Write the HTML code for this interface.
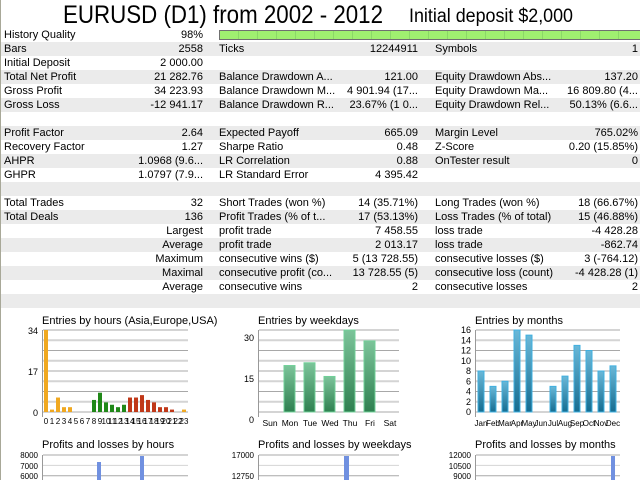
<!DOCTYPE html>
<html><head><meta charset="utf-8"><style>
*{margin:0;padding:0}
body{width:640px;height:480px;background:#fff;position:relative;overflow:hidden;font-family:"Liberation Sans",sans-serif;font-size:11px;color:#000}
.lb{position:absolute;left:0;top:0;width:1px;height:480px;background:#a8a898}
.r{position:absolute;left:1px;width:639px;height:14px}
.g{background:#ebebeb}
.t{position:absolute;top:1px;white-space:nowrap;line-height:13px}
.rt{text-align:right}
</style></head><body>
<div class="lb"></div>
<svg style="position:absolute;left:0;top:0" width="640" height="28">
<text x="63" y="23" font-family="Liberation Sans Narrow, Liberation Sans, sans-serif" font-size="25" textLength="320" lengthAdjust="spacingAndGlyphs">EURUSD (D1) from 2002 - 2012</text>
<text x="409" y="22" font-family="Liberation Sans Narrow, Liberation Sans, sans-serif" font-size="19" textLength="164" lengthAdjust="spacingAndGlyphs">Initial deposit $2,000</text>
</svg>
<div id="rows"></div>
<svg style="position:absolute;left:219px;top:30px" width="421" height="10">
<rect x="0.5" y="0.5" width="421" height="9" fill="#a0f070" stroke="#707070"/>
<g stroke="#8cd868" stroke-width="1">
<line x1="19.5" y1="1" x2="19.5" y2="9"/><line x1="38.5" y1="1" x2="38.5" y2="9"/><line x1="57.5" y1="1" x2="57.5" y2="9"/><line x1="76.5" y1="1" x2="76.5" y2="9"/><line x1="95.5" y1="1" x2="95.5" y2="9"/><line x1="114.5" y1="1" x2="114.5" y2="9"/><line x1="133.5" y1="1" x2="133.5" y2="9"/><line x1="152.5" y1="1" x2="152.5" y2="9"/><line x1="171.5" y1="1" x2="171.5" y2="9"/><line x1="190.5" y1="1" x2="190.5" y2="9"/><line x1="209.5" y1="1" x2="209.5" y2="9"/><line x1="228.5" y1="1" x2="228.5" y2="9"/><line x1="247.5" y1="1" x2="247.5" y2="9"/><line x1="266.5" y1="1" x2="266.5" y2="9"/><line x1="285.5" y1="1" x2="285.5" y2="9"/><line x1="304.5" y1="1" x2="304.5" y2="9"/><line x1="323.5" y1="1" x2="323.5" y2="9"/><line x1="342.5" y1="1" x2="342.5" y2="9"/><line x1="361.5" y1="1" x2="361.5" y2="9"/><line x1="380.5" y1="1" x2="380.5" y2="9"/><line x1="399.5" y1="1" x2="399.5" y2="9"/>
</g></svg>
<svg id="ch" style="position:absolute;left:0;top:308px" width="640" height="172" font-family="Liberation Sans, sans-serif"></svg>
<script>
var R=[
["History Quality","98%","","","",""],
["Bars","2558","Ticks","12244911","Symbols","1"],
["Initial Deposit","2 000.00","","","",""],
["Total Net Profit","21 282.76","Balance Drawdown A...","121.00","Equity Drawdown Abs...","137.20"],
["Gross Profit","34 223.93","Balance Drawdown M...","4 901.94 (17...","Equity Drawdown Ma...","16 809.80 (4..."],
["Gross Loss","-12 941.17","Balance Drawdown R...","23.67% (1 0...","Equity Drawdown Rel...","50.13% (6.6..."],
["","","","","",""],
["Profit Factor","2.64","Expected Payoff","665.09","Margin Level","765.02%"],
["Recovery Factor","1.27","Sharpe Ratio","0.48","Z-Score","0.20 (15.85%)"],
["AHPR","1.0968 (9.6...","LR Correlation","0.88","OnTester result","0"],
["GHPR","1.0797 (7.9...","LR Standard Error","4 395.42","",""],
["","","","","",""],
["Total Trades","32","Short Trades (won %)","14 (35.71%)","Long Trades (won %)","18 (66.67%)"],
["Total Deals","136","Profit Trades (% of t...","17 (53.13%)","Loss Trades (% of total)","15 (46.88%)"],
["#Largest","","profit trade","7 458.55","loss trade","-4 428.28"],
["#Average","","profit trade","2 013.17","loss trade","-862.74"],
["#Maximum","","consecutive wins ($)","5 (13 728.55)","consecutive losses ($)","3 (-764.12)"],
["#Maximal","","consecutive profit (co...","13 728.55 (5)","consecutive loss (count)","-4 428.28 (1)"],
["#Average","","consecutive wins","2","consecutive losses","2"],
["","","","","",""]];
var h="";
R.forEach(function(r,i){
 h+='<div class="r'+(i%2?' g':'')+'" style="top:'+(28+i*14)+'px">';
 if(r[0][0]=="#") h+='<span class="t rt" style="right:437px">'+r[0].slice(1)+'</span>';
 else { h+='<span class="t" style="left:3px">'+r[0]+'</span><span class="t rt" style="right:437px">'+r[1]+'</span>'; }
 h+='<span class="t" style="left:218px">'+r[2]+'</span><span class="t rt" style="right:222px">'+r[3]+'</span>';
 h+='<span class="t" style="left:434px">'+r[4]+'</span><span class="t rt" style="right:2px">'+r[5]+'</span></div>';
});
document.getElementById("rows").innerHTML=h;
var s="";
function grid(x0,x1,yt,yb){
 for(var k=0;k<9;k++){var y=yt+k*(yb-yt)/8;s+='<line x1="'+x0+'" y1="'+y+'" x2="'+x1+'" y2="'+y+'" stroke="'+(k%2?'#d4d4d4':'#a8a8a8')+'" stroke-width="'+(k%2?2:1)+'"/>';}
 s+='<line x1="'+(x0-0.5)+'" y1="'+yt+'" x2="'+(x0-0.5)+'" y2="'+(yb+5)+'" stroke="#999"/>';
}
function txt(x,y,t,sz,anc){s+='<text x="'+x+'" y="'+y+'" font-size="'+sz+'" text-anchor="'+(anc||'start')+'">'+t+'</text>';}
var T=22,B=104;
txt(42,16,"Entries by hours (Asia,Europe,USA)",11);
grid(43,188,T,B);
var hv=[34,1,6,2,2,0,0,0,5,8,4,3,2,3,6,6,7,5,4,2,2,1,0,1];
hv.forEach(function(v,i){var c=i<8||i>21?'#f0a820':(i<14?'#208818':'#c03818');var hh=v*82/34;if(v)s+='<rect x="'+(44+i*6)+'" y="'+(B-hh)+'" width="4" height="'+hh+'" fill="'+c+'"/>';
 txt(46+i*6,116,i,8,'middle');});
txt(38,26,"34",9,'end');txt(38,67,"17",9,'end');txt(38,108,"0",9,'end');
txt(258,16,"Entries by weekdays",11);
grid(259,399,T,B);
var wd=["Sun","Mon","Tue","Wed","Thu","Fri","Sat"],wv=[0,17,18,13,30,26,0];
s+='<defs><linearGradient id="gw" x1="0" y1="0" x2="0" y2="1"><stop offset="0" stop-color="#7cc49a"/><stop offset="1" stop-color="#2e8050"/></linearGradient><linearGradient id="gm" x1="0" y1="0" x2="0" y2="1"><stop offset="0" stop-color="#6ab8d8"/><stop offset="1" stop-color="#156c90"/></linearGradient></defs>';
wv.forEach(function(v,i){var hh=v*82/30;if(v)s+='<rect x="'+(264+i*20)+'" y="'+(B-hh)+'" width="11" height="'+hh+'" fill="url(#gw)" stroke="#70d098"/>';txt(270+i*20,118,wd[i],8.5,'middle');});
txt(254,33,"30",9,'end');txt(254,74,"15",9,'end');txt(254,115,"0",9,'end');
txt(475,16,"Entries by months",11);
grid(476,620,T,B);
var mn=["Jan","Feb","Mar","Apr","May","Jun","Jul","Aug","Sep","Oct","Nov","Dec"],mv=[8,5,6,16,15,0,5,7,13,12,8,9];
mv.forEach(function(v,i){var hh=v*82/16;if(v)s+='<rect x="'+(478+i*12)+'" y="'+(B-hh)+'" width="6" height="'+hh+'" fill="url(#gm)" stroke="#40b0e0"/>';txt(481+i*12,118,mn[i],8,'middle');});
for(var k=0;k<9;k++)txt(471,T+3+k*10.25,16-2*k,9,'end');
txt(42,140,"Profits and losses by hours",11);
txt(258,140,"Profits and losses by weekdays",11);
txt(475,140,"Profits and losses by months",11);
function bg(x0,x1){for(var k=0;k<4;k++){var y=147+k*10.4;s+='<line x1="'+x0+'" y1="'+y+'" x2="'+x1+'" y2="'+y+'" stroke="'+(k%2?'#d4d4d4':'#a8a8a8')+'"/>';}s+='<line x1="'+(x0-0.5)+'" y1="147" x2="'+(x0-0.5)+'" y2="172" stroke="#999"/>';}
bg(43,188);bg(259,399);bg(476,620);
txt(38,150,"8000",8,'end');txt(38,161,"7000",8,'end');txt(38,171,"6000",8,'end');
txt(254,150,"17000",8,'end');txt(254,171,"12750",8,'end');
txt(471,150,"12000",8,'end');txt(471,161,"10500",8,'end');txt(471,171,"9000",8,'end');
s+='<rect x="97" y="154" width="4" height="20" fill="#7090e0"/><rect x="140" y="148" width="4" height="26" fill="#7090e0"/>';
s+='<rect x="344" y="148" width="5" height="26" fill="#7090e0"/><rect x="611" y="148" width="4" height="26" fill="#7090e0"/>';
document.getElementById("ch").innerHTML=s;
</script>
</body></html>
